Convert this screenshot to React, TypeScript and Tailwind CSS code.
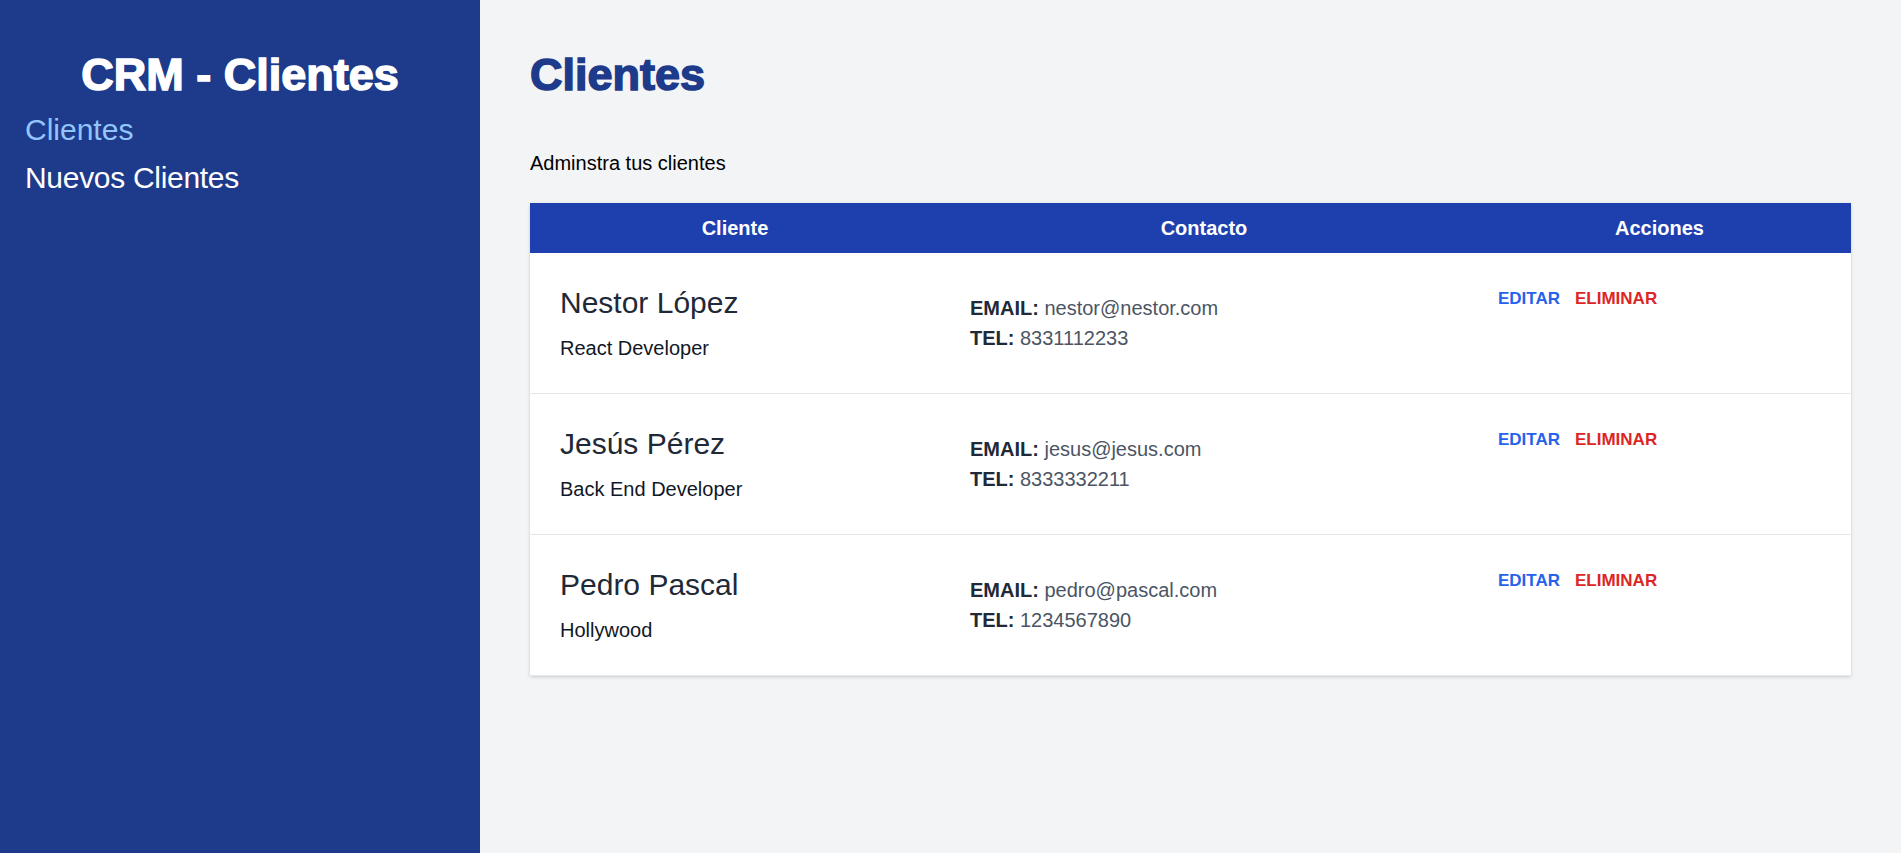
const clientes = [
  {
    id: 1,
    nombre: 'Nestor López',
    empresa: 'React Developer',
    email: 'nestor@nestor.com',
    telefono: '8331112233',
  },
  {
    id: 2,
    nombre: 'Jesús Pérez',
    empresa: 'Back End Developer',
    email: 'jesus@jesus.com',
    telefono: '8333332211',
  },
  {
    id: 3,
    nombre: 'Pedro Pascal',
    empresa: 'Hollywood',
    email: 'pedro@pascal.com',
    telefono: '1234567890',
  },
];

export default function App() {
  return (
    <div className="flex min-h-screen font-['Liberation_Sans',Arial,sans-serif]">
      <aside className="w-[480px] shrink-0 bg-[#1e3a8a] px-[25px] py-[50px]">
        <h2 className="text-center text-[45px] leading-[50px] font-black text-white [-webkit-text-stroke:1.5px_#ffffff]">
          CRM - Clientes
        </h2>
        <nav>
          <a href="#" className="mt-[10px] block text-[30px] leading-[40px] text-[#93c5fd]">
            Clientes
          </a>
          <a href="#" className="mt-[8px] block text-[30px] leading-[40px] tracking-[-0.3px] text-white">
            Nuevos Clientes
          </a>
        </nav>
      </aside>

      <main className="flex-1 bg-[#f3f4f6] p-[50px]">
        <h1 className="text-[45px] leading-[50px] font-black text-[#1e3a8a] [-webkit-text-stroke:1.5px_#1e3a8a]">
          Clientes
        </h1>
        <p className="mt-[48px] text-[20px] leading-[30px] text-black">Adminstra tus clientes</p>

        <table className="mt-[25px] w-full table-auto bg-white shadow-[0_1px_4px_0_rgb(0_0_0/0.12),0_1px_3px_-1px_rgb(0_0_0/0.1)]">
          <thead className="bg-[#1e40af] text-white">
            <tr>
              <th className="w-[410px] p-[10px] text-[20px] leading-[30px] font-bold">Cliente</th>
              <th className="w-[528px] p-[10px] text-[20px] leading-[30px] font-bold">Contacto</th>
              <th className="p-[10px] text-[20px] leading-[30px] font-bold">Acciones</th>
            </tr>
          </thead>
          <tbody>
            {clientes.map((c) => (
              <tr key={c.id} className="border-b border-[#e5e7eb]">
                <td className="p-[30px] align-middle">
                  <p className="text-[30px] leading-[40px] text-[#1f2937]">{c.nombre}</p>
                  <p className="mt-[10px] text-[20px] leading-[30px] text-[#111827]">{c.empresa}</p>
                </td>
                <td className="p-[30px] align-middle text-[20px] leading-[30px]">
                  <p className="text-[#4b5563]">
                    <span className="font-bold uppercase text-[#1f2937]">Email: </span>
                    {c.email}
                  </p>
                  <p className="text-[#4b5563]">
                    <span className="font-bold uppercase text-[#1f2937]">Tel: </span>
                    {c.telefono}
                  </p>
                </td>
                <td className="p-[30px] pt-[31px] align-top">
                  <div className="flex gap-[15px]">
                    <button
                      type="button"
                      className="text-[17px] leading-[30px] font-bold uppercase text-[#2563eb]"
                    >
                      Editar
                    </button>
                    <button
                      type="button"
                      className="text-[17px] leading-[30px] font-bold uppercase text-[#dc2626]"
                    >
                      Eliminar
                    </button>
                  </div>
                </td>
              </tr>
            ))}
          </tbody>
        </table>
      </main>
    </div>
  );
}
